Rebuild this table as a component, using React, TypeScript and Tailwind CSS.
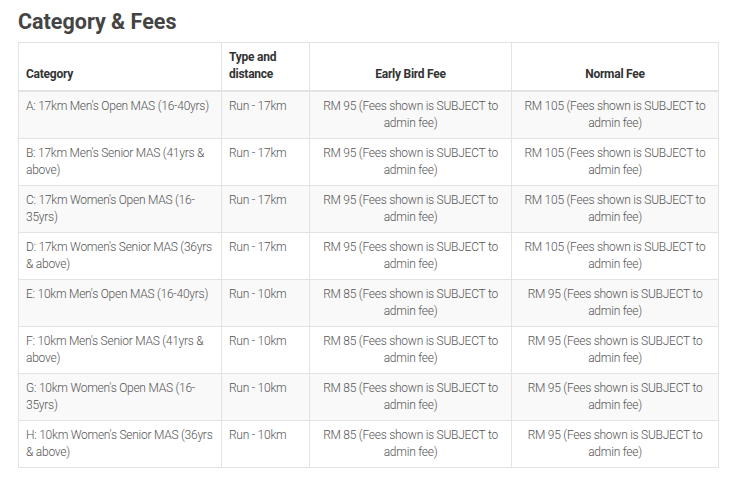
import React from "react";

const rows = [
  ["A: 17km Men's Open MAS (16-40yrs)", "Run - 17km", "RM 95 (Fees shown is SUBJECT to admin fee)", "RM 105 (Fees shown is SUBJECT to admin fee)"],
  ["B: 17km Men's Senior MAS (41yrs & above)", "Run - 17km", "RM 95 (Fees shown is SUBJECT to admin fee)", "RM 105 (Fees shown is SUBJECT to admin fee)"],
  ["C: 17km Women's Open MAS (16-35yrs)", "Run - 17km", "RM 95 (Fees shown is SUBJECT to admin fee)", "RM 105 (Fees shown is SUBJECT to admin fee)"],
  ["D: 17km Women's Senior MAS (36yrs & above)", "Run - 17km", "RM 95 (Fees shown is SUBJECT to admin fee)", "RM 105 (Fees shown is SUBJECT to admin fee)"],
  ["E: 10km Men's Open MAS (16-40yrs)", "Run - 10km", "RM 85 (Fees shown is SUBJECT to admin fee)", "RM 95 (Fees shown is SUBJECT to admin fee)"],
  ["F: 10km Men's Senior MAS (41yrs & above)", "Run - 10km", "RM 85 (Fees shown is SUBJECT to admin fee)", "RM 95 (Fees shown is SUBJECT to admin fee)"],
  ["G: 10km Women's Open MAS (16-35yrs)", "Run - 10km", "RM 85 (Fees shown is SUBJECT to admin fee)", "RM 95 (Fees shown is SUBJECT to admin fee)"],
  ["H: 10km Women's Senior MAS (36yrs & above)", "Run - 10km", "RM 85 (Fees shown is SUBJECT to admin fee)", "RM 95 (Fees shown is SUBJECT to admin fee)"],
];

export default function App() {
  return (
    <div
      className="w-[741px] h-[486px] bg-white px-[18px] pt-[8px]"
      style={{ fontFamily: "Roboto, 'Liberation Sans', sans-serif" }}
    >
      <h2 className="text-[21.5px] leading-[28px] font-bold text-[#444] mb-[6px]">Category &amp; Fees</h2>
      <table className="w-[700px] border-collapse table-fixed text-[12px] leading-[17px] text-[#555] font-light tracking-[-0.25px]">
        <colgroup>
          <col className="w-[203px]" />
          <col className="w-[88px]" />
          <col className="w-[202px]" />
          <col className="w-[207px]" />
        </colgroup>
        <thead>
          <tr className="text-[#333] font-bold">
            <th className="border border-[#e3e3e3] border-b-2 text-left align-bottom px-[7px] pt-[6px] pb-[7px]">Category</th>
            <th className="border border-[#e3e3e3] border-b-2 text-left align-bottom px-[7px] pt-[6px] pb-[7px]">Type and distance</th>
            <th className="border border-[#e3e3e3] border-b-2 text-center align-bottom px-[7px] pt-[6px] pb-[7px]">Early Bird Fee</th>
            <th className="border border-[#e3e3e3] border-b-2 text-center align-bottom px-[7px] pt-[6px] pb-[7px]">Normal Fee</th>
          </tr>
        </thead>
        <tbody>
          {rows.map((r, i) => (
            <tr key={i} className={i % 2 === 0 ? "bg-[#f9f9f9]" : "bg-white"}>
              <td className="border border-[#e3e3e3] align-top px-[7px] pt-[6px] pb-[6px]">{r[0]}</td>
              <td className="border border-[#e3e3e3] align-top px-[7px] pt-[6px] pb-[6px]">{r[1]}</td>
              <td className="border border-[#e3e3e3] align-top text-center px-[7px] pt-[6px] pb-[6px]">{r[2]}</td>
              <td className="border border-[#e3e3e3] align-top text-center px-[7px] pt-[6px] pb-[6px]">{r[3]}</td>
            </tr>
          ))}
        </tbody>
      </table>
    </div>
  );
}
